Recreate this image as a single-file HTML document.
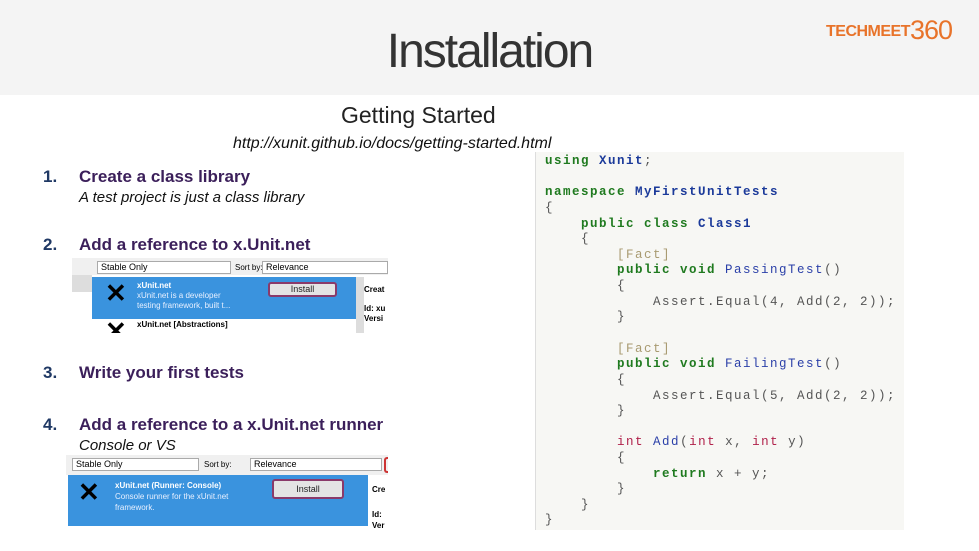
<!DOCTYPE html>
<html><head><meta charset="utf-8"><style>
*{margin:0;padding:0;box-sizing:border-box}
body{width:979px;height:551px;background:#fff;position:relative;overflow:hidden;font-family:"Liberation Sans",sans-serif}
.hdr{position:absolute;left:0;top:0;width:979px;height:95px;background:#f4f4f4}
.title{position:absolute;left:0;width:979px;top:24px;text-align:center;font-size:48px;letter-spacing:-2px;color:#333;font-family:"Liberation Sans",sans-serif}
.logo{position:absolute;left:826px;top:12px;color:#e8732a;font-weight:bold;font-size:16px;letter-spacing:-0.5px}
.logo b{font-size:27px;font-weight:normal;position:relative;top:3px;letter-spacing:-1px}
.t{position:absolute;white-space:nowrap}
.num{color:#1f3864;font-weight:bold;font-size:17px}
.head{color:#3b1f5a;font-weight:bold;font-size:17px}
.it{font-style:italic;font-size:15px;color:#111}
.code{position:absolute;left:535px;top:152px;width:369px;height:378px;background:#f7f7f4;border-left:1px solid #ddd}
.ln{position:absolute;font-family:"Liberation Mono",monospace;font-size:12.5px;letter-spacing:1.5px;white-space:pre;color:#555}
.g{color:#1f7a1f;font-weight:bold}.b{color:#2a3fa8}.bb{color:#1b3a9a;font-weight:bold}.r{color:#b0204a}.f{color:#a89a70}
.shot{position:absolute;background:#fff;overflow:hidden}
.dd{position:absolute;height:13px;border:1px solid #aaa;font-size:9px;padding-left:3px;line-height:11px;background:#fff}
.sel{position:absolute;background:#3a93de;color:#fff}
.btn{position:absolute;border:2px solid #8a3a6a;border-radius:3px;background:#e4e4e4;font-size:9px;color:#222;text-align:center}
.x{position:absolute;font-size:26px;font-weight:bold;color:#000;line-height:1}
.sm{position:absolute;font-size:8px;white-space:nowrap}
</style></head><body>
<div class="hdr"></div>
<div class="title">Installation</div>
<div class="logo">TECHMEET<b>360</b></div>
<div class="t" style="left:341px;top:102px;font-size:23px;color:#222">Getting Started</div>
<div class="t it" style="left:233px;top:135px;font-size:16px">http://xunit.github.io/docs/getting-started.html</div>

<div class="t num" style="left:43px;top:167px">1.</div>
<div class="t head" style="left:79px;top:167px">Create a class library</div>
<div class="t it" style="left:79px;top:189px">A test project is just a class library</div>
<div class="t num" style="left:43px;top:235px">2.</div>
<div class="t head" style="left:79px;top:235px">Add a reference to x.Unit.net</div>
<div class="t num" style="left:43px;top:363px">3.</div>
<div class="t head" style="left:79px;top:363px">Write your first tests</div>
<div class="t num" style="left:43px;top:415px">4.</div>
<div class="t head" style="left:79px;top:415px">Add a reference to a x.Unit.net runner</div>
<div class="t it" style="left:79px;top:437px">Console or VS</div>

<div class="shot" style="left:72px;top:258px;width:316px;height:75px">
 <div style="position:absolute;left:0;top:0;width:316px;height:17px;background:#f0f0f0"></div>
 <div class="dd" style="left:25px;top:3px;width:134px">Stable Only</div>
 <div class="sm" style="left:163px;top:5px">Sort by:</div>
 <div class="dd" style="left:190px;top:3px;width:126px">Relevance</div>
 <div style="position:absolute;left:0;top:17px;width:20px;height:17px;background:#ddd"></div>
 <div class="sel" style="left:20px;top:19px;width:264px;height:42px"></div>
 <div class="x" style="left:33px;top:22px">✕</div>
 <div class="sm" style="left:65px;top:23px;color:#fff;font-weight:bold">xUnit.net</div>
 <div class="sm" style="left:65px;top:33px;color:#e8f0ff">xUnit.net is a developer</div>
 <div class="sm" style="left:65px;top:43px;color:#e8f0ff">testing framework, built t...</div>
 <div class="btn" style="left:196px;top:24px;width:69px;height:15px;line-height:11px">Install</div>
 <div style="position:absolute;left:284px;top:19px;width:8px;height:56px;background:#ddd"></div>
 <div class="sm" style="left:292px;top:27px;font-weight:bold">Creat</div>
 <div class="sm" style="left:292px;top:46px;font-weight:bold">Id: xu</div>
 <div class="sm" style="left:292px;top:56px;font-weight:bold">Versi</div>
 <div class="x" style="left:33px;top:60px">✕</div>
 <div class="sm" style="left:65px;top:62px;font-weight:bold">xUnit.net [Abstractions]</div>
</div>

<div class="shot" style="left:66px;top:455px;width:322px;height:80px">
 <div style="position:absolute;left:0;top:0;width:322px;height:20px;background:#f0f0f0"></div>
 <div class="dd" style="left:6px;top:3px;width:127px">Stable Only</div>
 <div class="sm" style="left:138px;top:5px">Sort by:</div>
 <div class="dd" style="left:184px;top:3px;width:132px">Relevance</div>
 <div style="position:absolute;left:318px;top:2px;width:4px;height:16px;border:2px solid #c33;border-right:none;border-radius:3px 0 0 3px"></div>
 <div class="sel" style="left:2px;top:20px;width:300px;height:51px"></div>
 <div class="x" style="left:12px;top:24px">✕</div>
 <div class="sm" style="left:49px;top:26px;color:#fff;font-weight:bold">xUnit.net (Runner: Console)</div>
 <div class="sm" style="left:49px;top:37px;color:#e8f0ff">Console runner for the xUnit.net</div>
 <div class="sm" style="left:49px;top:48px;color:#e8f0ff">framework.</div>
 <div class="btn" style="left:206px;top:24px;width:72px;height:20px;line-height:16px">Install</div>
 <div class="sm" style="left:306px;top:30px;font-weight:bold">Cre</div>
 <div class="sm" style="left:306px;top:55px;font-weight:bold">Id:</div>
 <div class="sm" style="left:306px;top:66px;font-weight:bold">Ver</div>
</div>

<div class="code">
<div class="ln" style="left:9px;top:2px"><span class="g">using</span> <span class="bb">Xunit</span>;</div>
<div class="ln" style="left:9px;top:33px"><span class="g">namespace</span> <span class="bb">MyFirstUnitTests</span></div>
<div class="ln" style="left:9px;top:49px">{</div>
<div class="ln" style="left:9px;top:65px">    <span class="g">public class</span> <span class="bb">Class1</span></div>
<div class="ln" style="left:9px;top:80px">    {</div>
<div class="ln" style="left:9px;top:96px">        <span class="f">[Fact]</span></div>
<div class="ln" style="left:9px;top:111px">        <span class="g">public void</span> <span class="b">PassingTest</span>()</div>
<div class="ln" style="left:9px;top:127px">        {</div>
<div class="ln" style="left:9px;top:143px">            Assert.Equal(4, Add(2, 2));</div>
<div class="ln" style="left:9px;top:158px">        }</div>
<div class="ln" style="left:9px;top:190px">        <span class="f">[Fact]</span></div>
<div class="ln" style="left:9px;top:205px">        <span class="g">public void</span> <span class="b">FailingTest</span>()</div>
<div class="ln" style="left:9px;top:221px">        {</div>
<div class="ln" style="left:9px;top:237px">            Assert.Equal(5, Add(2, 2));</div>
<div class="ln" style="left:9px;top:252px">        }</div>
<div class="ln" style="left:9px;top:283px">        <span class="r">int</span> <span class="b">Add</span>(<span class="r">int</span> x, <span class="r">int</span> y)</div>
<div class="ln" style="left:9px;top:299px">        {</div>
<div class="ln" style="left:9px;top:315px">            <span class="g">return</span> x + y;</div>
<div class="ln" style="left:9px;top:330px">        }</div>
<div class="ln" style="left:9px;top:346px">    }</div>
<div class="ln" style="left:9px;top:361px">}</div>
</div>
</body></html>
